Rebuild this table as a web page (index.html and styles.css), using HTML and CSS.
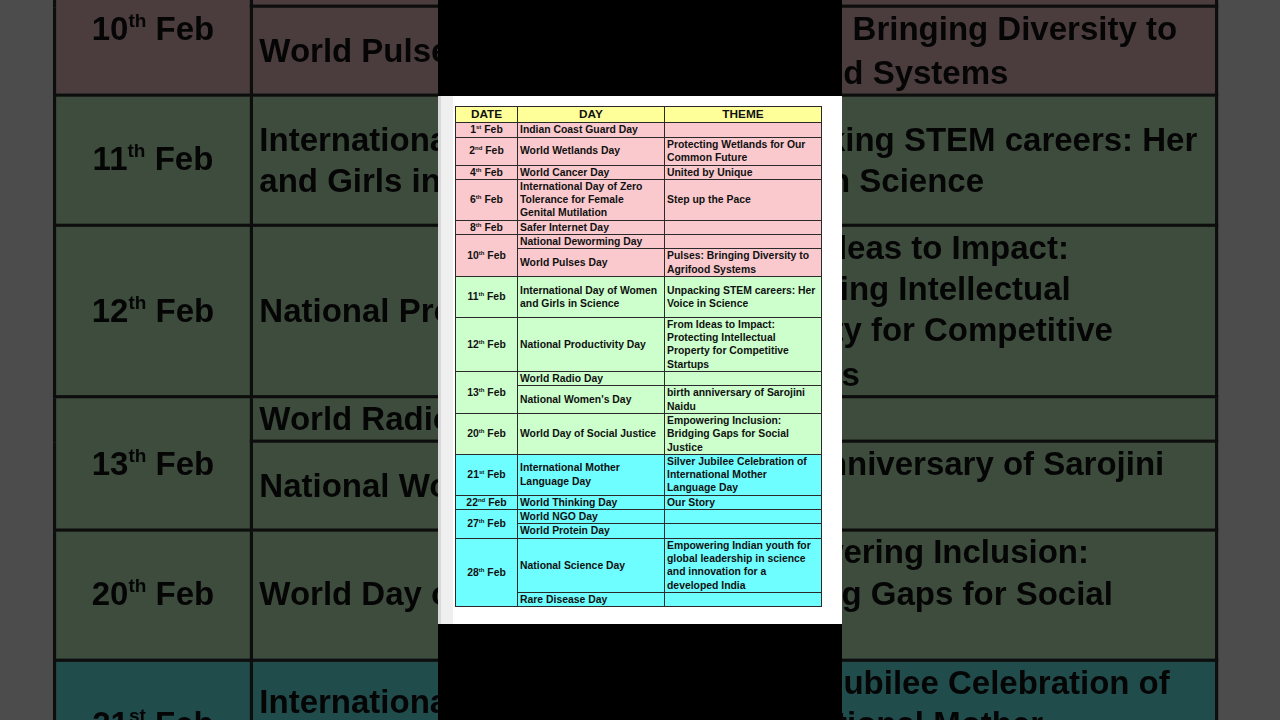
FILE: index.html
```html
<!DOCTYPE html>
<html lang="en">
<head>
<meta charset="utf-8">
<title>February Important Days</title>
<link rel="stylesheet" href="styles.css">
</head>
<body>
<div class="stage">
  <div class="backdrop" aria-hidden="true">
    <div class="card card-bg">
      <table class="days">
        <colgroup><col class="c-date"><col class="c-day"><col class="c-theme"></colgroup>
        <thead><tr><th>DATE</th><th>DAY</th><th>THEME</th></tr></thead>
        <tbody>
          <tr class="pink r1"><td class="date">1<sup>st</sup> Feb</td><td>Indian Coast Guard Day</td><td>&nbsp;</td></tr>
          <tr class="pink r2"><td class="date">2<sup>nd</sup> Feb</td><td>World Wetlands Day</td><td>Protecting Wetlands for Our<br>Common Future</td></tr>
          <tr class="pink"><td class="date">4<sup>th</sup> Feb</td><td>World Cancer Day</td><td>United by Unique</td></tr>
          <tr class="pink"><td class="date">6<sup>th</sup> Feb</td><td>International Day of Zero<br>Tolerance for Female<br>Genital Mutilation</td><td>Step up the Pace</td></tr>
          <tr class="pink"><td class="date">8<sup>th</sup> Feb</td><td>Safer Internet Day</td><td>&nbsp;</td></tr>
          <tr class="pink"><td class="date" rowspan="2">10<sup>th</sup> Feb</td><td>National Deworming Day</td><td>&nbsp;</td></tr>
          <tr class="pink"><td>World Pulses Day</td><td>Pulses: Bringing Diversity to<br>Agrifood Systems</td></tr>
          <tr class="green tall"><td class="date">11<sup>th</sup> Feb</td><td>International Day of Women<br>and Girls in Science</td><td>Unpacking STEM careers: Her<br>Voice in Science</td></tr>
          <tr class="green"><td class="date">12<sup>th</sup> Feb</td><td>National Productivity Day</td><td>From Ideas to Impact:<br>Protecting Intellectual<br>Property for Competitive<br>Startups</td></tr>
          <tr class="green"><td class="date" rowspan="2">13<sup>th</sup> Feb</td><td>World Radio Day</td><td>&nbsp;</td></tr>
          <tr class="green"><td>National Women's Day</td><td>birth anniversary of Sarojini<br>Naidu</td></tr>
          <tr class="green"><td class="date">20<sup>th</sup> Feb</td><td>World Day of Social Justice</td><td>Empowering Inclusion:<br>Bridging Gaps for Social<br>Justice</td></tr>
          <tr class="cyan"><td class="date">21<sup>st</sup> Feb</td><td>International Mother<br>Language Day</td><td>Silver Jubilee Celebration of<br>International Mother<br>Language Day</td></tr>
          <tr class="cyan"><td class="date">22<sup>nd</sup> Feb</td><td>World Thinking Day</td><td>Our Story</td></tr>
          <tr class="cyan"><td class="date" rowspan="2">27<sup>th</sup> Feb</td><td>World NGO Day</td><td>&nbsp;</td></tr>
          <tr class="cyan"><td>World Protein Day</td><td>&nbsp;</td></tr>
          <tr class="cyan"><td class="date" rowspan="2">28<sup>th</sup> Feb</td><td>National Science Day</td><td>Empowering Indian youth for<br>global leadership in science<br>and innovation for a<br>developed India</td></tr>
          <tr class="cyan"><td>Rare Disease Day</td><td>&nbsp;</td></tr>
        </tbody>
      </table>
    </div>
  </div>

  <div class="phone">
    <div class="bar"></div>
    <div class="card card-front">
      <table class="days">
        <colgroup><col class="c-date"><col class="c-day"><col class="c-theme"></colgroup>
        <thead><tr><th>DATE</th><th>DAY</th><th>THEME</th></tr></thead>
        <tbody>
          <tr class="pink r1"><td class="date">1<sup>st</sup> Feb</td><td>Indian Coast Guard Day</td><td>&nbsp;</td></tr>
          <tr class="pink r2"><td class="date">2<sup>nd</sup> Feb</td><td>World Wetlands Day</td><td>Protecting Wetlands for Our<br>Common Future</td></tr>
          <tr class="pink"><td class="date">4<sup>th</sup> Feb</td><td>World Cancer Day</td><td>United by Unique</td></tr>
          <tr class="pink"><td class="date">6<sup>th</sup> Feb</td><td>International Day of Zero<br>Tolerance for Female<br>Genital Mutilation</td><td>Step up the Pace</td></tr>
          <tr class="pink"><td class="date">8<sup>th</sup> Feb</td><td>Safer Internet Day</td><td>&nbsp;</td></tr>
          <tr class="pink"><td class="date" rowspan="2">10<sup>th</sup> Feb</td><td>National Deworming Day</td><td>&nbsp;</td></tr>
          <tr class="pink"><td>World Pulses Day</td><td>Pulses: Bringing Diversity to<br>Agrifood Systems</td></tr>
          <tr class="green tall"><td class="date">11<sup>th</sup> Feb</td><td>International Day of Women<br>and Girls in Science</td><td>Unpacking STEM careers: Her<br>Voice in Science</td></tr>
          <tr class="green"><td class="date">12<sup>th</sup> Feb</td><td>National Productivity Day</td><td>From Ideas to Impact:<br>Protecting Intellectual<br>Property for Competitive<br>Startups</td></tr>
          <tr class="green"><td class="date" rowspan="2">13<sup>th</sup> Feb</td><td>World Radio Day</td><td>&nbsp;</td></tr>
          <tr class="green"><td>National Women's Day</td><td>birth anniversary of Sarojini<br>Naidu</td></tr>
          <tr class="green"><td class="date">20<sup>th</sup> Feb</td><td>World Day of Social Justice</td><td>Empowering Inclusion:<br>Bridging Gaps for Social<br>Justice</td></tr>
          <tr class="cyan"><td class="date">21<sup>st</sup> Feb</td><td>International Mother<br>Language Day</td><td>Silver Jubilee Celebration of<br>International Mother<br>Language Day</td></tr>
          <tr class="cyan"><td class="date">22<sup>nd</sup> Feb</td><td>World Thinking Day</td><td>Our Story</td></tr>
          <tr class="cyan"><td class="date" rowspan="2">27<sup>th</sup> Feb</td><td>World NGO Day</td><td>&nbsp;</td></tr>
          <tr class="cyan"><td>World Protein Day</td><td>&nbsp;</td></tr>
          <tr class="cyan"><td class="date" rowspan="2">28<sup>th</sup> Feb</td><td>National Science Day</td><td>Empowering Indian youth for<br>global leadership in science<br>and innovation for a<br>developed India</td></tr>
          <tr class="cyan"><td>Rare Disease Day</td><td>&nbsp;</td></tr>
        </tbody>
      </table>
    </div>
    <div class="bar"></div>
  </div>
</div>
</body>
</html>
```

FILE: styles.css
```css
* { box-sizing: border-box; }
html, body { margin: 0; padding: 0; background: #000; }
body { font-family: "Liberation Sans", Arial, sans-serif; }

.stage {
  position: relative;
  width: 1280px;
  height: 720px;
  overflow: hidden;
  background: #4d4d4d;
  display: flex;
  justify-content: center;
}

/* darkened zoomed copy behind the video column */
.backdrop {
  position: absolute;
  inset: 0;
  overflow: hidden;
}
.card-bg {
  position: absolute;
  left: -0.65px;
  top: -478px;
  transform-origin: 0 0;
  transform: scale(3.175);
  filter: brightness(0.3) blur(0.25px);
}

.phone {
  position: relative;
  width: 404px;
  height: 720px;
  display: flex;
  flex-direction: column;
}
.bar {
  height: 96px;
  background: #000;
  flex: none;
}

.card {
  width: 404px;
  height: 528px;
  background: #fff;
  padding: 10px 0 0 17px;
  flex: none;
}
.card-front {
  background: linear-gradient(to right, #d8d8d8 0 3px, #efefef 3px 15px, #fff 15px);
}

.days {
  border-collapse: collapse;
  table-layout: fixed;
  width: 366px;
  border: 1.5px solid #2a2a2a;
  color: #111;
  font-weight: bold;
  font-size: 10.4px;
  line-height: 13.3px;
}
.c-date { width: 62px; }
.c-day { width: 147px; }
.c-theme { width: 157px; }

.days th {
  background: #ffff99;
  font-size: 11.8px;
  line-height: 14.5px;
  text-align: center;
  border: 1px solid #2a2a2a;
  padding: 0;
}
.days td {
  border: 1px solid #2a2a2a;
  padding: 0 0 0 2px;
  vertical-align: middle;
  text-align: left;
  white-space: nowrap;
}
.days tr.r1 { height: 15px; }
.days tr.r2 { height: 28px; }
.days tr.tall { height: 41px; }
.days td.date {
  text-align: center;
  padding: 0;
}
.days sup {
  font-size: 6px;
  line-height: 0;
  vertical-align: 4px;
}

.pink td { background: #f9c9cd; }
.green td { background: #ccffcc; }
.cyan td { background: #6ffeff; }
```
